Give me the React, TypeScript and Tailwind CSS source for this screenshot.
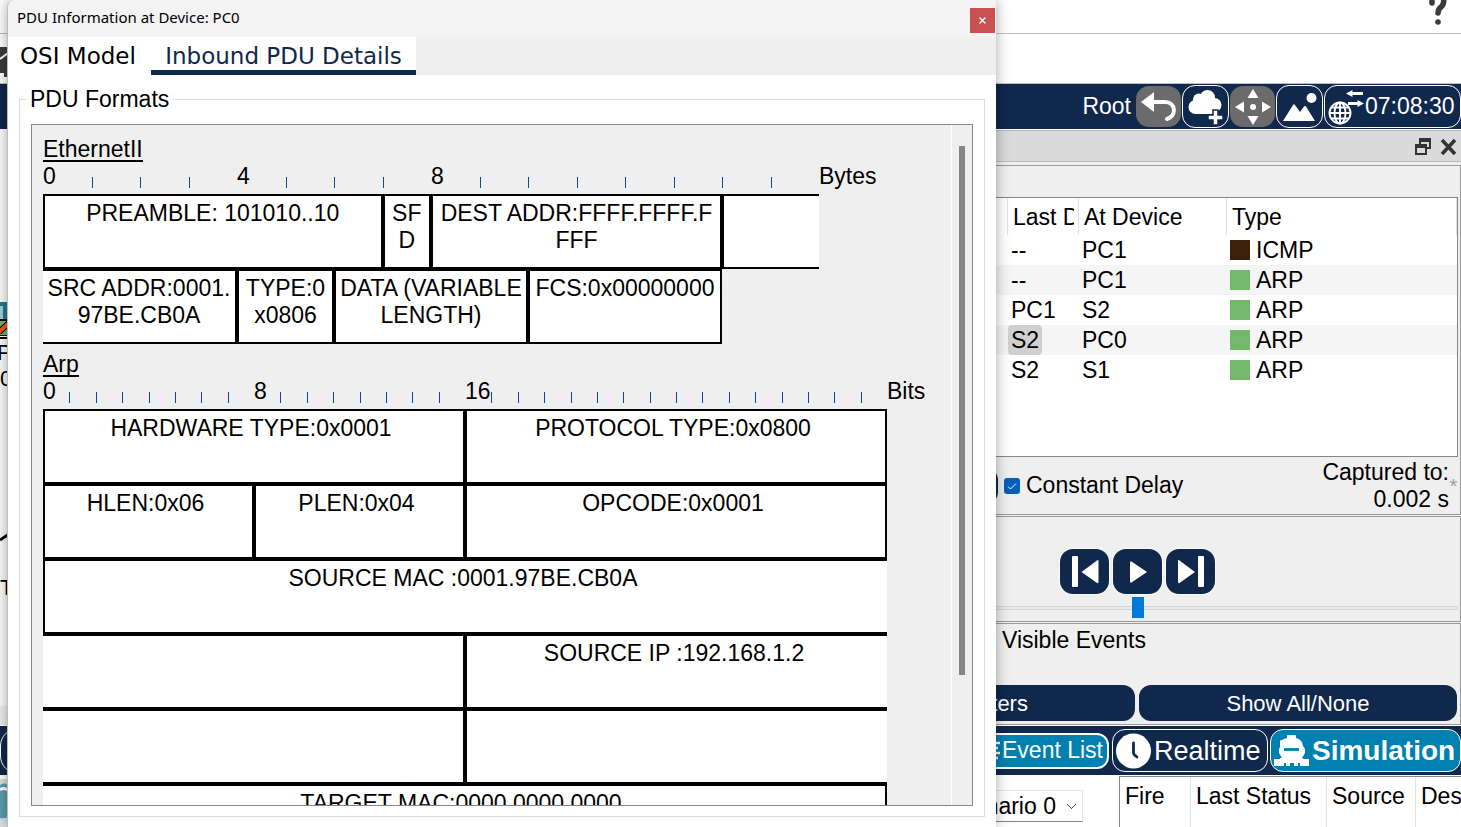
import React from "react";

type Cell = { span: number; lines?: string[]; openLeft?: boolean; openRight?: boolean; blank?: boolean };

const ethernetRows: Cell[][] = [
  [
    { span: 7, lines: ["PREAMBLE: 101010..10"] },
    { span: 1, lines: ["SF", "D"] },
    { span: 6, lines: ["DEST ADDR:FFFF.FFFF.F", "FFF"] },
    { span: 2, openRight: true },
  ],
  [
    { span: 4, lines: ["SRC ADDR:0001.", "97BE.CB0A"], openLeft: true },
    { span: 2, lines: ["TYPE:0", "x0806"] },
    { span: 4, lines: ["DATA (VARIABLE", "LENGTH)"] },
    { span: 4, lines: ["FCS:0x00000000"] },
    { span: 2, blank: true },
  ],
];

const arpRows: Cell[][] = [
  [
    { span: 16, lines: ["HARDWARE TYPE:0x0001"] },
    { span: 16, lines: ["PROTOCOL TYPE:0x0800"] },
  ],
  [
    { span: 8, lines: ["HLEN:0x06"] },
    { span: 8, lines: ["PLEN:0x04"] },
    { span: 16, lines: ["OPCODE:0x0001"] },
  ],
  [{ span: 32, lines: ["SOURCE MAC :0001.97BE.CB0A"], openRight: true }],
  [
    { span: 16, openLeft: true },
    { span: 16, lines: ["SOURCE IP :192.168.1.2"], openRight: true },
  ],
  [
    { span: 16, openLeft: true },
    { span: 16, openRight: true },
  ],
  [{ span: 32, lines: ["TARGET MAC:0000.0000.0000"], openLeft: true }],
];

const events = [
  { last: "--", at: "PC1", type: "ICMP" },
  { last: "--", at: "PC1", type: "ARP" },
  { last: "PC1", at: "S2", type: "ARP" },
  { last: "S2", at: "PC0", type: "ARP", selected: true },
  { last: "S2", at: "S1", type: "ARP" },
];

function Ruler({ count, labelEvery, unit, width }: { count: number; labelEvery: number; unit: string; width: string }) {
  const marks = Array.from({ length: count }, (_, i) => i);
  return (
    <div className="flex h-[27px]">
      <div className={`flex ${width}`}>
        {marks.map((i) => {
          const labelled = i % labelEvery === 0 && i / labelEvery < 3;
          return (
            <div key={i} className="flex min-w-0 flex-1 items-end">
              {labelled ? <span className="whitespace-nowrap">{i}</span> : <span className="mb-0.5 h-[11px] w-px bg-[#0c4a96]" />}
            </div>
          );
        })}
      </div>
      <span>{unit}</span>
    </div>
  );
}

type FormatProps = { title: string; count: number; labelEvery: number; unit: string; width: string; rows: Cell[][]; cellPad?: string };

function Format({ title, count, labelEvery, unit, width, rows, cellPad = "" }: FormatProps) {
  return (
    <section>
      <h2 className="flex h-[26px]"><span className="h-[25px] border-b-2 border-black leading-[25px]">{title}</span></h2>
      <Ruler count={count} labelEvery={labelEvery} unit={unit} width={width} />
      <table className={`mt-1 table-fixed border-separate border-spacing-0 ${width}`} aria-label={`${title} format`}>
        <colgroup>
          {Array.from({ length: count }, (_, i) => <col key={i} />)}
        </colgroup>
        <tbody>
          {rows.map((row, r) => (
            <tr key={r}>
              {row.map((c, i) => (
                <td
                  key={i}
                  colSpan={c.span}
                  className={
                    c.blank
                      ? "p-0"
                      : `h-[75px] border-y-2 border-black bg-white p-0 pt-1 text-center align-top whitespace-nowrap ${c.openLeft ? "" : "border-l-2"} ${c.openRight ? "" : "border-r-2"}`
                  }
                >
                  {c.lines?.map((l) => <div key={l} className={`flex justify-center ${cellPad}`}>{l}</div>)}
                </td>
              ))}
            </tr>
          ))}
        </tbody>
      </table>
    </section>
  );
}

function PduDialog() {
  return (
    <div role="dialog" aria-label="PDU Information at Device: PC0" className="absolute inset-y-0 left-[7px] z-10 flex w-[989px] flex-col overflow-hidden rounded-tl-lg border-l border-[#bdbdbd] bg-white shadow-[0_0_14px_rgba(0,0,0,0.35)]">
      <header className="flex h-[37px] shrink-0 items-center justify-between bg-[#f3f3f3] pl-[9px]">
        <h1 className="pb-0.5 font-['Noto_Sans',sans-serif] text-[15px]">PDU Information at Device: PC0</h1>
        <button aria-label="Close" className="mt-[3px] mr-px flex h-[25px] w-[25px] items-center justify-center bg-[#c75050]">
          <svg width="7" height="7" viewBox="0 0 7 7" stroke="#fff" strokeWidth="1.3"><path d="M0.5 0.5 6.5 6.5M6.5 0.5 0.5 6.5" /></svg>
        </button>
      </header>
      <div role="tablist" className="flex h-[38px] shrink-0 bg-[#efefef] font-['DejaVu_Sans',sans-serif] text-[23px]">
        <button role="tab" aria-selected="false" className="w-[143px] bg-white pl-3 text-left whitespace-nowrap">OSI Model</button>
        <button role="tab" aria-selected="true" className="w-[265px] border-b-[5px] border-[#10284c] bg-white pt-[5px] whitespace-nowrap text-[#10284c]">Inbound PDU Details</button>
      </div>
      <fieldset className="mx-[11px] mt-[11px] mb-[10px] flex min-h-0 flex-1 flex-col border border-[#dcdcdc] px-[11px] pb-[10px]">
        <legend className="-ml-[5px] px-1">PDU Formats</legend>
        <div className="mt-[11px] flex min-h-0 flex-1 overflow-hidden border border-[#828790] bg-[#efefef]">
          <div className="flex min-w-0 flex-1 flex-col gap-2 overflow-hidden border-r border-white pt-3 pl-[11px]">
            <Format title="EthernetII" count={16} labelEvery={4} unit="Bytes" width="w-[776px]" rows={ethernetRows} />
            <Format title="Arp" count={32} labelEvery={8} unit="Bits" width="w-[844px]" rows={arpRows} cellPad="pr-1.5" />
          </div>
          <div className="flex w-5 shrink-0 justify-center pt-[21px]">
            <div className="h-[529px] w-[6px] bg-[#868686]" />
          </div>
        </div>
      </fieldset>
    </div>
  );
}

const outlined = "flex h-[43px] w-[47px] items-center justify-center rounded-[13px] border border-white";
const muted = "flex h-[41px] w-[45px] items-center justify-center rounded-[13px] bg-[#6b6b6b]";

function TopBars() {
  return (
    <>
      <div className="flex h-[34px] shrink-0 justify-end border-b border-[#bfbfbf] pr-[13px]">
        <button aria-label="Help" className="flex h-[26px] w-5">
          <svg width="20" height="26" viewBox="0 0 20 26" fill="none" stroke="#3b3b3d" strokeWidth="5.500">
            <path d="M4 3V1M15.500 -2Q16.500 3.500 13.500 6.500 10 9 10 13" strokeLinecap="round" />
            <circle cx="10" cy="22" r="2.800" fill="#3b3b3d" stroke="none" />
          </svg>
        </button>
      </div>
      <div className="flex h-[50px] shrink-0 items-start border-b border-[#bfbfbf] pt-[13px]">
        <svg width="8" height="30" viewBox="0 0 8 30"><path d="M0 0H8V30H4V26H0Z" fill="#3b3b3d" /><path d="M0 12 8 6" stroke="#fff" strokeWidth="2" /></svg>
      </div>
      <div className="flex h-[46px] shrink-0 items-center justify-end gap-px border-b border-white bg-[#10284c] text-white">
        <span className="mr-1">Root</span>
        <button aria-label="Back" className={muted}>
          <svg width="36" height="30" viewBox="0 0 36 30"><path d="M0 10 13 0V20Z" fill="#fff" /><path d="M12 10H24C35 10 36 24 26 27" fill="none" stroke="#fff" strokeWidth="4" strokeLinecap="round" /></svg>
        </button>
        <button aria-label="New cluster" className={outlined}>
          <svg width="36" height="36" viewBox="0 0 36 36" fill="#fff"><circle cx="7.500" cy="18" r="7" /><circle cx="11" cy="10.500" r="6" /><circle cx="19.500" cy="8.500" r="7.500" /><circle cx="26.500" cy="16" r="7" /><path d="M8 12H28V25H8Z" /><path d="M20 26H25V21H30V26H35V31H30V36H25V31H20Z" stroke="#10284c" strokeWidth="1.500" /></svg>
        </button>
        <button aria-label="Move object" className={muted}>
          <svg width="36" height="36" viewBox="0 0 36 36" fill="#fff"><path d="M18 0 23.500 9H12.500ZM18 36 23.500 27H12.500ZM0 18 9 12.500V23.500ZM36 18 27 12.500V23.500Z" /><circle cx="18" cy="18" r="3" /></svg>
        </button>
        <button aria-label="Set background image" className={outlined}>
          <svg width="34" height="30" viewBox="0 0 34 30" fill="#fff"><circle cx="28.500" cy="6" r="5" /><path d="M0 29 10 13Q11 11.500 12 13L17 20 21 14.500Q22 13.500 23 14.500L32 29Z" /></svg>
        </button>
        <button className="flex h-[43px] w-[137px] items-center rounded-[13px] border border-white pl-[3px] text-white">
          <svg width="36" height="36" viewBox="0 0 36 36" fill="none" stroke="#fff">
            <g strokeWidth="1.900"><circle cx="12" cy="24" r="10.500" /><path d="M12 13V35M1 24H23M3 18.500H21M3 29.500H21" /><ellipse cx="12" cy="24" rx="5.500" ry="10.500" /></g>
            <path d="M22 4.500H35M20 14.500H32" strokeWidth="3.200" />
            <path d="M18 4.500 24.500 1V8ZM36 14.500 29.500 11V18Z" fill="#fff" stroke="none" />
          </svg>
          <span className="ml-px">07:08:30</span>
        </button>
      </div>
    </>
  );
}

function Canvas() {
  return (
    <main className="flex min-w-0 flex-1 flex-col bg-[#fcfcfc]">
      <svg width="12" height="575" viewBox="0 0 12 575" className="shrink-0">
        <path d="M0 173H5V190H0" fill="#a9cdd6" /><path d="M0 172H7V190H3V176H0Z" fill="#22798e" />
        <path d="M0 189H12V209H0Z" fill="#000" /><path d="M0 191H12V205H0Z" fill="#6cb566" />
        <path d="M-1 202 9 193" stroke="#000" strokeWidth="6" /><path d="M-1 202 9 193" stroke="#f95a14" strokeWidth="4" />
        <path d="M0 206.500H12" stroke="#fff" strokeWidth="1" />
        <path d="M0 410 12 402" stroke="#000" strokeWidth="3" />
        <g fill="#000" fontFamily="Liberation Sans, sans-serif" fontSize="22"><text x="-3" y="230">PC0</text><text x="0" y="256">0</text><text x="0" y="465">T</text></g>
      </svg>
      <div className="mt-auto h-[19px] bg-[#efefef]" />
    </main>
  );
}

const action = "h-9 flex-1 rounded-xl bg-[#10284c] text-[22px] text-white";
const step = "flex h-[45px] w-[49px] items-center justify-center rounded-[13px] bg-[#10284c] shadow-[0_0_0_1px_#fafafa]";

function SimulationPanel() {
  return (
    <aside className="flex w-[648px] shrink-0 flex-col bg-[#efefef]">
      <div className="flex h-8 shrink-0 items-center justify-end gap-2 border-y border-[#bababa] bg-[#dadada] pt-0.5 pr-1">
        <button aria-label="Float panel">
          <svg width="17" height="18" viewBox="0 0 17 18" fill="none" stroke="#333" strokeWidth="2"><path d="M5 6V2H15V10H11M1 8H11V16H1Z" /><path d="M4 2H16M0 8H12" strokeWidth="4" /></svg>
        </button>
        <button aria-label="Close panel">
          <svg width="17" height="18" viewBox="0 0 17 18" stroke="#333" strokeWidth="3.500"><path d="M2 2 15 16M15 2 2 16" /></svg>
        </button>
      </div>
      <section className="mt-[3px] flex min-h-0 flex-1 flex-col border border-[#9b9b9b] pt-[31px] pr-[2px] pl-[3px]">
        <div className="min-h-0 flex-1 overflow-hidden border border-[#828790] bg-white">
          <table className="w-full table-fixed border-separate border-spacing-0">
            <colgroup><col /><col className="w-[71px]" /><col className="w-[148px]" /><col className="w-[231px]" /></colgroup>
            <thead>
              <tr className="text-left">
                <th className="h-[37px] p-0" aria-label="Time" />
                <th className="border-l border-[#e2e2e2] p-0 pt-0.5 pr-1 pl-[5px] font-normal whitespace-nowrap"><div className="overflow-hidden">Last Device</div></th>
                <th className="border-l border-[#e2e2e2] p-0 pt-0.5 pl-[5px] font-normal">At Device</th>
                <th className="border-x border-[#e2e2e2] p-0 pt-0.5 pl-[5px] font-normal">Type</th>
              </tr>
            </thead>
            <tbody>
              {events.map((e, i) => (
                <tr key={i} className={i % 2 ? "bg-[#f5f5f5]" : "bg-white"}>
                  <td className="h-[30px] p-0" />
                  <td className="p-0 pl-px"><span className={e.selected ? "inline-block h-[30px] rounded-sm bg-[#d0d0d0] px-[3px] leading-[30px] align-top" : "px-[3px]"}>{e.last}</span></td>
                  <td className="p-0 pl-1">{e.at}</td>
                  <td className="p-0 pl-1"><span className="flex items-center gap-1.5"><span className={e.type === "ICMP" ? "size-5 bg-[#3d200b]" : "size-5 bg-[#73b86b]"} />{e.type}</span></td>
                </tr>
              ))}
            </tbody>
          </table>
        </div>
        <div className="flex h-[57px] shrink-0 items-center">
          <button className="h-9 w-[181px] rounded-xl bg-[#10284c] text-white">Reset Simulation</button>
          <label className="ml-1.5 flex items-center gap-1.5">
            <span className="grid size-4">
              <input type="checkbox" defaultChecked className="col-start-1 row-start-1 size-4 appearance-none rounded-[3px] bg-[#005fb8]" />
              <svg className="pointer-events-none col-start-1 row-start-1" width="16" height="16" viewBox="0 0 16 16" fill="none" stroke="#fff"><path d="M4 8.500 6.500 11 12 5.500" /></svg>
            </span>
            Constant Delay
          </label>
          <p className="ml-auto text-right">Captured to:<br />0.002 s</p>
          <span className="w-[9px] text-center text-xl text-[#a0a0a0]">*</span>
        </div>
      </section>
      <section className="mt-px flex h-[106px] shrink-0 flex-col border border-[#9b9b9b] pt-8 pr-[2px] pl-[3px]">
        <div className="flex justify-center gap-1">
          <button aria-label="Step back" className={step}><svg width="28" height="32" viewBox="0 0 28 32" fill="#fff"><rect x="1" width="6" height="31" rx="1" /><path d="M27.500 5V26Q27.500 27.500 26 27L10.500 16 26 4.500Q27.500 3.500 27.500 5Z" /></svg></button>
          <button aria-label="Play" className={step}><svg width="18" height="22" viewBox="0 0 18 22" fill="#fff"><path d="M1 1.500Q1 0 2.500 0.500L18 11 2.500 21.500Q1 22 1 20.500Z" /></svg></button>
          <button aria-label="Step forward" className={step}><svg width="28" height="32" viewBox="0 0 28 32" fill="#fff"><rect x="21" width="6" height="31" rx="1" /><path d="M1 5V26Q1 27.500 2.500 27L18 16 2.500 4.500Q1 3.500 1 5Z" /></svg></button>
        </div>
        <input type="range" aria-label="Play speed" defaultValue={50} className="mt-[3px] h-[21px] w-full appearance-none bg-transparent [&::-webkit-slider-runnable-track]:h-1 [&::-webkit-slider-runnable-track]:border [&::-webkit-slider-runnable-track]:border-[#d2d6d6] [&::-webkit-slider-runnable-track]:bg-[#e7eaea] [&::-webkit-slider-thumb]:-mt-[10px] [&::-webkit-slider-thumb]:h-[21px] [&::-webkit-slider-thumb]:w-3 [&::-webkit-slider-thumb]:appearance-none [&::-webkit-slider-thumb]:bg-[#0078d7]" />
      </section>
      <section className="mt-px flex h-[102px] shrink-0 flex-col justify-between border border-[#9b9b9b] px-[3px] pt-[3px] pb-[3px]">
        <p className="flex justify-end pr-[311px] whitespace-nowrap">Event List Filters - Visible Events</p>
        <div className="flex gap-1">
          <button className={action}>Edit Filters</button>
          <button className={action}>Show All/None</button>
        </div>
      </section>
    </aside>
  );
}

function BottomBars() {
  return (
    <>
      <div className="flex h-[51px] shrink-0 items-center gap-[2px] border-y border-white bg-[#10284c] text-white">
        <button aria-label="Time" className="mr-auto h-[46px] w-[60px] rounded-[18px] border border-white" />
        <button className="mr-px flex h-9 items-center rounded-xl border-2 border-white bg-[#0080b0] px-1">
          <svg width="18" height="24" viewBox="0 0 18 24" stroke="#fff" strokeWidth="2.500"><path d="M2 4H16M2 9H14M2 14H16M2 19H14" /></svg>
          <span>Event List</span>
        </button>
        <button className="flex h-[43px] w-[156px] items-center gap-[2px] rounded-[13px] border border-white pl-[3px] text-[27px]">
          <svg width="36" height="36" viewBox="0 0 36 36"><circle cx="17.500" cy="18" r="17.500" fill="#fff" /><path d="M17.500 10V19.500Q17.500 21 18.500 22L21 24" fill="none" stroke="#10284c" strokeWidth="2.800" strokeLinecap="round" /></svg>
          <span className="pt-0.5">Realtime</span>
        </button>
        <button className="flex h-[43px] w-[191px] items-center gap-[2px] rounded-[13px] border border-white bg-[#0080b0] pl-[3px] text-[28px] font-bold">
          <svg width="36" height="32" viewBox="0 0 36 32" fill="#fff">
            <path d="M13 3V1Q13 0 14 0H21Q22 0 22 1V3Q28 4 29 11L31 14V18L28 23H29V24H35V31H26V28H24V31H20V28H16V31H12V28H10V31H0V24H6V23H8L5 18V14L6 12V6Q6 5 8 5 10 3.500 13 3Z" />
            <path d="M10 14.500H25" stroke="#0080b0" strokeWidth="2.800" />
          </svg>
          Simulation
        </button>
      </div>
      <div className="flex h-[51px] shrink-0 overflow-hidden">
        <svg width="12" height="51" viewBox="0 0 12 51" className="mr-auto"><path d="M0 3H12V51H0Z" fill="#d8e0e2" /><path d="M0 9Q5 5 12 11V40Q5 43 0 42Z" fill="#5a9fae" /><path d="M0 14Q4 10 12 17" stroke="#fff" strokeWidth="3" fill="none" /></svg>
        <select aria-label="Scenario" className="mt-3.5 mr-9 h-8 w-[138px] appearance-none border border-[#e4e4e4] border-b-[#858585] bg-white bg-[linear-gradient(45deg,transparent_45%,#555_45%,#555_55%,transparent_55%),linear-gradient(-45deg,transparent_45%,#555_45%,#555_55%,transparent_55%)] bg-[length:5px_5px,5px_5px] bg-[position:right_10px_center,right_6px_center] bg-no-repeat"><option>Scenario 0</option></select>
        <table className="h-[51px] w-[342px] table-fixed border-separate border-spacing-0 border-t border-l border-[#828790] text-left">
          <thead>
            <tr className="align-top">
              <th className="w-[70px] p-0 pt-1.5 pl-[5px] font-normal">Fire</th>
              <th className="w-[136px] border-l border-[#e2e2e2] p-0 pt-1.5 pl-[5px] font-normal whitespace-nowrap">Last Status</th>
              <th className="w-[89px] border-l border-[#e2e2e2] p-0 pt-1.5 pl-[5px] font-normal">Source</th>
              <th className="overflow-hidden border-l border-[#e2e2e2] p-0 pt-1.5 pl-[5px] font-normal">Destination</th>
            </tr>
          </thead>
        </table>
      </div>
    </>
  );
}

export default function App() {
  return (
    <div className="relative flex h-screen flex-col overflow-hidden bg-white font-['Liberation_Sans',Arial,sans-serif] text-[23px] leading-[27px] text-black">
      <TopBars />
      <div className="flex min-h-0 flex-1">
        <Canvas />
        <SimulationPanel />
      </div>
      <BottomBars />
      <PduDialog />
    </div>
  );
}
